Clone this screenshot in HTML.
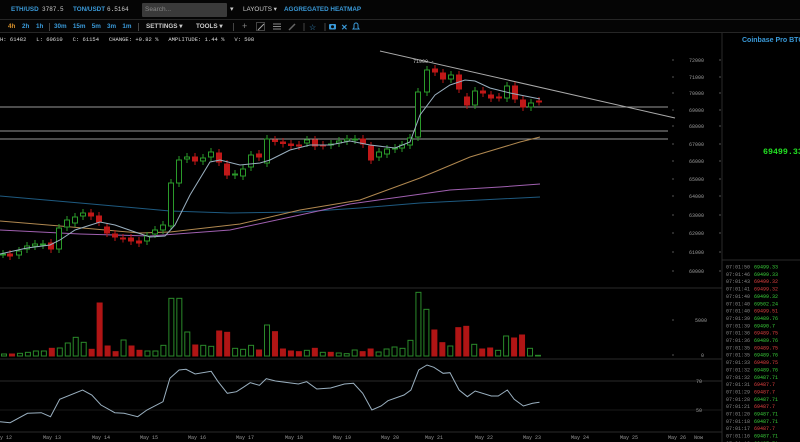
<!DOCTYPE html>
<html><head><meta charset="utf-8"><style>
*{margin:0;padding:0;box-sizing:border-box}
body{width:800px;height:442px;background:#000;overflow:hidden;position:relative;font-family:"Liberation Sans",sans-serif}
.t{position:absolute;white-space:nowrap}
.b{color:#3a9ad9;font-weight:bold;font-size:6.3px}
.m{font-family:"Liberation Mono",monospace}
</style></head><body>
<div style="position:absolute;left:0;top:0;width:800px;height:20px;background:#050505;border-bottom:1px solid #262626"></div>
<div style="position:absolute;left:0;top:20px;width:800px;height:13px;background:#050505;border-bottom:1px solid #262626"></div>
<div class="t b" style="left:11px;top:6px">ETH/USD</div>
<div class="t m" style="left:42px;top:6px;font-size:6px;color:#ccc">3787.5</div>
<div class="t b" style="left:73px;top:6px">TON/USDT</div>
<div class="t m" style="left:107px;top:6px;font-size:6px;color:#ccc">6.5164</div>
<div style="position:absolute;left:142px;top:3px;width:85px;height:14px;background:#3a3a3a;border-radius:1px"></div>
<div class="t" style="left:145px;top:6px;font-size:6.5px;color:#888">Search...</div>
<div class="t" style="left:230px;top:5px;font-size:7px;color:#ccc">▾</div>
<div class="t" style="left:243px;top:6px;font-size:6.3px;color:#ccc">LAYOUTS ▾</div>
<div class="t b" style="left:284px;top:6px">AGGREGATED HEATMAP</div>
<div class="t" style="left:8px;top:23px;font-size:6.3px;font-weight:bold;color:#d8902a">4h</div>
<div class="t b" style="left:22px;top:23px">2h</div>
<div class="t b" style="left:36px;top:23px">1h</div>
<div style="position:absolute;left:49px;top:23px;width:1px;height:8px;background:#444"></div>
<div class="t b" style="left:54px;top:23px;word-spacing:4.5px">30m 15m 5m 3m 1m</div>
<div style="position:absolute;left:138px;top:23px;width:1px;height:8px;background:#444"></div>
<div class="t" style="left:146px;top:23px;font-size:6.3px;font-weight:bold;color:#ccc">SETTINGS ▾</div>
<div class="t" style="left:196px;top:23px;font-size:6.3px;font-weight:bold;color:#ccc">TOOLS ▾</div>
<div style="position:absolute;left:233px;top:23px;width:1px;height:8px;background:#444"></div>
<div class="t" style="left:242px;top:21px;font-size:9px;color:#888">+</div>
<div style="position:absolute;left:256px;top:22px;width:9px;height:9px;border:1px solid #444"></div>
<svg style="position:absolute;left:0;top:0" width="800" height="442">
<line x1="258" y1="30" x2="264" y2="24" stroke="#aaa" stroke-width="1"/>
<g stroke="#888"><line x1="273" y1="24" x2="281" y2="24"/><line x1="273" y1="26.5" x2="281" y2="26.5"/><line x1="273" y1="29" x2="281" y2="29"/></g>
<line x1="289" y1="30" x2="295" y2="24" stroke="#666" stroke-width="1.5"/>
<line x1="304" y1="23" x2="304" y2="31" stroke="#444"/>
<text x="309" y="30" fill="#3a9ad9" font-size="8">☆</text>
<line x1="325" y1="23" x2="325" y2="31" stroke="#444"/>
<rect x="329" y="24" width="7" height="5.5" rx="1" fill="#3a9ad9"/><circle cx="332.5" cy="26.8" r="1.5" fill="#050505"/>
<text x="341" y="30" fill="#3a9ad9" font-size="8" font-weight="bold">✕</text>
<path d="M353 29h6l-1-1.5v-2.5a2 2 0 0 0-4 0v2.5z" fill="none" stroke="#3a9ad9"/>
</svg>
<div class="t m" style="left:0;top:36px;font-size:5.5px;color:#ddd;white-space:pre">H: 61482   L: 60610   C: 61154   CHANGE: +0.82 %   AMPLITUDE: 1.44 %   V: 508</div>
<div class="t" style="left:742px;top:37px;font-size:7px;font-weight:bold;color:#3a9ad9">Coinbase Pro BTC</div>
<div class="t m" style="left:763px;top:148px;font-size:8.3px;font-weight:bold;color:#22e022">69499.33</div>
<svg id="s" style="position:absolute;left:0;top:0" width="800" height="442"></svg>
<script>
var s='';
function L(a,b,c,d,col,w){s+='<line x1="'+a+'" y1="'+b+'" x2="'+c+'" y2="'+d+'" stroke="'+col+'" stroke-width="'+(w||1)+'"/>';}
function T(x,y,t,c,f){s+='<text x="'+x+'" y="'+y+'" fill="'+(c||'#aaa')+'" font-size="'+(f||5.5)+'" font-family="Liberation Mono,monospace">'+t+'</text>';}
L(722,33,722,442,'#2a2a2a');
L(0,288,722,288,'#2a2a2a');L(0,359,722,359,'#2a2a2a');L(0,432,722,432,'#2a2a2a');
L(722,260,800,260,'#2a2a2a');
var ax=[[72000,60],[71000,77],[70000,93],[69000,110],[68000,126],[67000,144],[66000,161],[65000,179],[64000,196],[63000,215],[62000,233],[61000,252],[60000,271]];
ax.forEach(function(a){T(689,a[1]+2,a[0],'#999',5);L(672,a[1],674,a[1],'#555');L(719,a[1],721,a[1],'#555');});
T(695,322,'5000','#999',5);T(701,357,'0','#999',5);L(672,320,674,320,'#555');L(672,355,674,355,'#555');
L(0,381,722,381,'#2a2a2a');L(0,410,722,410,'#1a1a1a');
T(696,383,'70','#999',5);T(696,412,'50','#999',5);
L(0,107,668,107,'#999');L(0,131,668,131,'#999');L(0,139,668,139,'#999');
L(380,51,675,118,'#aaa');
T(413,63,'71900 -','#ccc',5);
function P(pts,c){s+='<polyline fill="none" stroke="'+c+'" stroke-width="1" points="'+pts+'"/>';}
P('0,196 80,203 170,211 230,213 300,212 360,208 420,203 480,200 540,197','#1e5a80');
P('0,221 60,226 140,233 170,232 240,224 300,210 360,200 420,178 470,157 520,142 540,137','#b08850');
P('0,230 80,234 150,236 230,230 300,215 350,204 400,197 450,190 500,187 540,184','#a060b0');
var C=[[3,254,254],[10,254,256],[19,255,251],[27,249,246],[35,246,244],[43,245,244],[51,243,249],[59,249,228],[67,227,220],[75,223,217],[83,216,213],[91,213,216],[99,216,222],[107,227,233],[115,234,237],[123,238,238.5],[131,238,241],[139,241,243],[147,241,236],[155,234,230],[163,230,225],[171,226,183],[179,183,160],[187,159,157],[195,157,161],[203,161,158],[211,157,152],[219,153,162],[227,164,175],[235,175,174],[243,176,169],[251,167,155],[259,154,157],[267,163,139],[275,140,141.5],[283,142,143.5],[291,144,145.5],[299,145,146],[307,143,140],[315,140,146],[323,145,145.5],[331,145,144],[339,143,141],[347,141,139],[355,140,139],[363,139,144],[371,146,160],[379,157,152],[387,154,149],[395,149,148],[402,148,145],[410,145,138],[418,137,92],[427,92,70],[435,69,72],[443,73,79],[451,79,75],[459,75,89],[467,97,105],[475,105,91],[483,91,93],[491,95,98],[499,97,97.5],[507,98,86],[515,86,99],[523,100,107],[531,107,103],[539,101,101.5]];
C.forEach(function(c){var g=c[2]<=c[1];var top=Math.min(c[1],c[2]),bot=Math.max(c[1],c[2]);var col=g?'#2a9a2a':'#c01818';
L(c[0],top-4,c[0],bot+4,col);
s+='<rect x="'+(c[0]-2.5)+'" y="'+top+'" width="5" height="'+Math.max(1,bot-top)+'" fill="'+(g?'#000':'#c01818')+'" stroke="'+col+'" stroke-width="1"/>';});
P('0,254 27,248 50,245 60,240 75,230 100,222 115,225 135,232 150,237 165,236 175,225 190,195 210,162 220,160 240,165 260,163 270,160 290,150 310,145 330,145 350,141 370,145 395,148 410,142 420,115 435,95 450,85 465,80 475,81 490,88 510,93 530,97 540,99','#9ab0c0');
var V='g222 r222 g220 g217 g213 g213 r205 g204 g189 g172 g187 r208 r69 r198 r215 g180 r198 r211 g213 g213 g196 g55 g55 g156 r195 g196 g199 r153 r157 g205 g208 g196 r210 g135 r155 r207 r213 r215 g211 r205 g217 r217 g219 g221 g210 r215 r207 g216 g207 g201 g205 g181 g37 g88 r150 r188 g198 r143 r139 g193 r207 r204 g211 g168 r174 r165 g205 g226'.split(' ');
V.forEach(function(v,i){var g=v[0]=='g';var top=280+(+v.slice(1))/3;var x=1+i*7.97;
s+='<rect x="'+(x+0.5)+'" y="'+top+'" width="5" height="'+(356-top)+'" fill="'+(g?'#000':'#b01515')+'" stroke="'+(g?'#2a8a2a':'#b01515')+'" stroke-width="1"/>';});
var R=[[0,425],[22,428],[60,400],[90,398],[110,410],[130,358],[180,330],[200,345],[220,375],[250,398],[270,400],[300,410],[320,390],[355,365],[370,295],[390,270],[405,268],[425,282],[460,274],[475,305],[495,340],[515,335],[530,322],[545,308],[565,316],[580,296],[600,303],[650,312],[668,305],[690,327],[720,324],[750,312],[770,310],[790,340],[810,390],[830,378],[845,362],[880,345],[895,330],[912,270],[930,255],[945,262],[965,280],[980,278],[1000,330],[1018,350],[1035,333],[1070,348],[1085,348],[1105,330],[1120,358],[1140,378],[1160,370],[1175,367]];
P(R.map(function(p){return (p[0]/2.178).toFixed(1)+','+(280+p[1]/3).toFixed(1)}).join(' '),'#9ab0c0');
var D=[[0,'y 12'],[43,'May 13'],[92,'May 14'],[140,'May 15'],[188,'May 16'],[236,'May 17'],[285,'May 18'],[333,'May 19'],[381,'May 20'],[425,'May 21'],[475,'May 22'],[523,'May 23'],[571,'May 24'],[620,'May 25'],[668,'May 26'],[694,'Now']];
D.forEach(function(d){T(d[0],439,d[1],'#999',5);});
var tr=['07:01:50 g69499.33','07:01:46 g69499.33','07:01:43 r69499.32','07:01:41 r69499.32','07:01:40 g69499.32','07:01:40 g69502.24','07:01:40 r69499.51','07:01:39 g69489.76','07:01:39 g69490.7','07:01:36 r69489.75','07:01:36 g69489.76','07:01:35 r69489.75','07:01:35 g69489.76','07:01:33 r69489.75','07:01:32 g69489.76','07:01:32 g69487.71','07:01:31 r69487.7','07:01:29 r69487.7','07:01:28 g69487.71','07:01:21 r69487.7','07:01:20 g69487.71','07:01:18 g69487.71','07:01:17 r69487.7','07:01:16 g69487.71','07:01:13 g69487.71','07:01:10 g69487.71','07:01:08 r69487.7'];
tr.forEach(function(t,i){var y=268.5+i*7.35;var p=t.split(' ');T(726,y,p[0],'#888',5);T(754,y,p[1].slice(1),p[1][0]=='g'?'#3ad03a':'#e04040',5);});
document.getElementById('s').innerHTML=s;
</script>
</body></html>
